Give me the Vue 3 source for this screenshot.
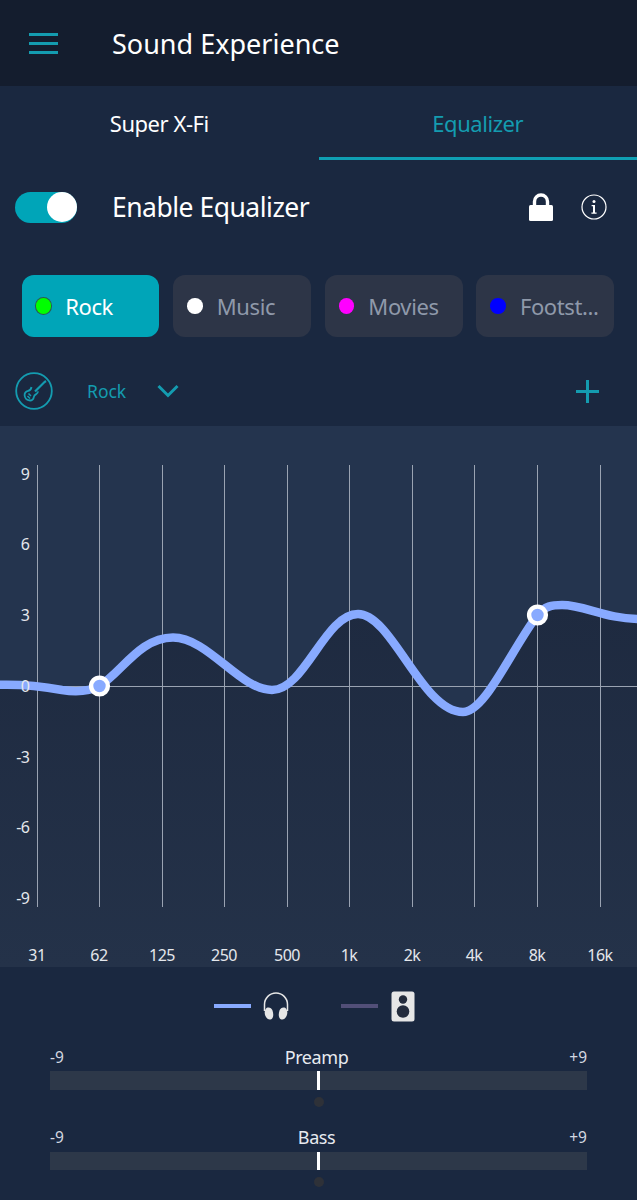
<template>
  <div class="screen">
    <header class="topbar">
      <button class="menu-btn" aria-label="Menu"><span></span><span></span><span></span></button>
      <h1>Sound Experience</h1>
    </header>

    <nav class="tabs">
      <div class="tab">Super X-Fi</div>
      <div class="tab active">Equalizer</div>
    </nav>

    <section class="enable-row">
      <div class="toggle"><div class="knob"></div></div>
      <div class="enable-label">Enable Equalizer</div>
      <svg class="lock" width="26" height="30" viewBox="0 0 26 30">
        <path d="M6.500 15V9.500a6.500 6.500 0 0 1 13 0V15" fill="none" stroke="#fff" stroke-width="3.400" />
        <rect x="1" y="13" width="24" height="16" rx="1.500" fill="#fff" />
      </svg>
      <svg class="info" width="26" height="26" viewBox="0 0 26 26">
        <circle cx="13" cy="13" r="12" fill="none" stroke="#fff" stroke-width="1.200" />
        <circle cx="13" cy="7.600" r="1.500" fill="#fff" />
        <path d="M10.600 11h3.400v7.400h1.600v1.300h-5.200v-1.300h1.600v-6.100h-1.400z" fill="#fff" />
      </svg>
    </section>

    <section class="presets">
      <div v-for="p in presets" :key="p.name" class="preset" :class="{ selected: p.selected }">
        <span class="dot" :style="{ background: p.color }"></span>
        <span class="preset-name">{{ p.name }}</span>
      </div>
    </section>

    <section class="profile-row">
      <svg class="guitar" width="38" height="38" viewBox="0 0 38 38" fill="none" stroke="#149cb0">
        <circle cx="19" cy="19" r="17.800" stroke-width="1.800" />
        <path d="M20 19.500L29.500 10l1.500-1" stroke-width="2.200" />
        <path d="M16.500 15c-.3 2-1.500 3.300-3.300 3.800-2 .6-3.800 1.800-3.600 4.400.2 2.500 2.200 4.700 4.600 5.200 2.600.5 4.300-1 4.600-3.300.2-1.500 1-2.300 2.400-3 1.200-.6 1.800-1.500 1.700-2.700" stroke-width="1.800" />
        <path d="M13.500 21.500l2.500 2.500M12.500 24l2.500 2.500" stroke-width="1.500" />
      </svg>
      <span class="profile-name">Rock</span>
      <svg class="chevron" width="22" height="14" viewBox="0 0 22 14">
        <path d="M1.500 2L11 11.500 20.500 2" fill="none" stroke="#149cb0" stroke-width="3" />
      </svg>
      <svg class="plus" width="23" height="23" viewBox="0 0 23 23">
        <path d="M11.500 0v23M0 11.500h23" fill="none" stroke="#149cb0" stroke-width="3" />
      </svg>
    </section>

    <section class="chart">
      <svg width="637" height="540" viewBox="0 0 637 540">
        <defs>
          <linearGradient id="underCurve" x1="0" y1="0" x2="0" y2="1">
            <stop offset="0" stop-color="#1e2a40" />
            <stop offset="1" stop-color="#243249" />
          </linearGradient>
        </defs>
        <path :d="fillPath" fill="url(#underCurve)" />
        <g stroke="#9aa3b2" stroke-width="1">
          <line v-for="x in gridX" :key="x" :x1="x" :x2="x" y1="38" y2="480" />
          <line x1="37" x2="637" y1="259.500" y2="259.500" />
        </g>
        <path :d="curvePath" fill="none" stroke="#88aaff" stroke-width="8.500" stroke-linecap="round" />
        <g class="axis">
          <text v-for="t in yTicks" :key="t.label" x="29.500" :y="t.y" text-anchor="end">{{ t.label }}</text>
          <text v-for="(f, i) in freqs" :key="f" :x="gridX[i] - 0.500" y="534" text-anchor="middle">{{ f }}</text>
        </g>
        <circle v-for="h in handles" :key="h.x" :cx="h.x" :cy="h.y" r="8.400" fill="#88aaff" stroke="#fff" stroke-width="4.400" />
      </svg>
    </section>

    <section class="legend">
      <span class="legend-line headphones"></span>
      <svg class="legend-icon" width="28" height="30" viewBox="0 0 28 30">
        <path d="M2.500 20v-6.500a11.500 11.500 0 0 1 23 0V20" fill="none" stroke="#e6e6e6" stroke-width="1.500" />
        <path d="M4.500 17c2.500-1.200 5 0 6 2.500 1 3 1 5.500 0 7.500-1.200 2-3.500 2-5 .8C2.500 25 1.500 20 4.500 17z" fill="#e6e6e6" />
        <path d="M23.500 17c-2.500-1.200-5 0-6 2.500-1 3-1 5.500 0 7.500 1.200 2 3.500 2 5 .8 3-2.800 4-7.800 1-10.800z" fill="#e6e6e6" />
      </svg>
      <span class="legend-line speaker"></span>
      <svg class="legend-icon" width="24" height="31" viewBox="0 0 24 31">
        <rect x="0.500" y="0.500" width="23" height="30" rx="2.500" fill="#e6e6e6" />
        <circle cx="12" cy="8.500" r="4.200" fill="#232b3c" />
        <circle cx="12" cy="20.500" r="6.300" fill="#232b3c" />
      </svg>
    </section>

    <section class="sliders">
      <div v-for="s in sliders" :key="s" class="slider">
        <div class="slider-head">
          <span class="limit">-9</span>
          <span class="slider-name">{{ s }}</span>
          <span class="limit">+9</span>
        </div>
        <div class="track"><div class="thumb"></div></div>
        <div class="center-dot"></div>
      </div>
    </section>
  </div>
</template>

<script setup>
const presets = [
  { name: 'Rock', color: '#00ff00', selected: true },
  { name: 'Music', color: '#ffffff' },
  { name: 'Movies', color: '#ff00ff' },
  { name: 'Footst...', color: '#0000ff' }
]

const gridX = [37.5, 99.5, 162.5, 224.5, 287.5, 349.5, 412.5, 474.5, 537.5, 600.5]
const freqs = ['31', '62', '125', '250', '500', '1k', '2k', '4k', '8k', '16k']
const yTicks = [
  { label: '9', y: 52.5 },
  { label: '6', y: 123 },
  { label: '3', y: 194 },
  { label: '0', y: 264.5 },
  { label: '-3', y: 335.5 },
  { label: '-6', y: 406 },
  { label: '-9', y: 477 }
]
const sliders = ['Preamp', 'Bass']

// chart svg starts at y=427 of the page
const handles = [
  { x: 99.5, y: 259 },
  { x: 537.5, y: 188 }
]

const curvePath =
  'M-4 258 C 20 257, 40 259, 62 263 C 75 265, 88 265, 99.5 259 ' +
  'C 122 245, 140 210.5, 173 210.5 C 208 210.5, 240 263, 272 263 ' +
  'C 305 263, 325 187, 358 187 C 392 187, 422 285, 463 285 ' +
  'C 485 285, 510 225, 537.5 188 C 545 179, 552 178, 562 178 ' +
  'C 585 178, 605 192, 641 192'

const fillPath = curvePath + ' L641 540 L-4 540 Z'
</script>

<style scoped>
.screen {
  width: 637px;
  height: 1200px;
  overflow: hidden;
  background: #1a2840;
  color: #fff;
  font-family: "Noto Sans", "Open Sans", sans-serif;
}

.topbar {
  height: 86px;
  background: #141d2e;
  display: flex;
  align-items: center;
  padding-left: 29px;
}

.menu-btn {
  width: 29px;
  height: 21px;
  padding: 0;
  border: none;
  background: none;
  display: flex;
  flex-direction: column;
  justify-content: space-between;
  margin-right: 54px;
}

.menu-btn span {
  display: block;
  height: 3px;
  background: #149cb0;
}

.topbar h1 {
  margin: 0;
  font-size: 27px;
  font-weight: 400;
}

.tabs {
  display: flex;
  height: 74px;
}

.tab {
  flex: 1;
  display: flex;
  align-items: center;
  justify-content: center;
  font-size: 22px;
  letter-spacing: -0.45px;
  box-sizing: border-box;
}

.tab.active {
  color: #149cb0;
  border-bottom: 3px solid #0f9fb3;
  padding-top: 3px;
}

.enable-row {
  display: flex;
  align-items: center;
  height: 94px;
  padding: 0 30px 0 15px;
}

.toggle {
  width: 62px;
  height: 31px;
  border-radius: 16px;
  background: #00a5b8;
  position: relative;
  margin-right: 35px;
}

.knob {
  position: absolute;
  right: 0;
  top: 0.5px;
  width: 30px;
  height: 30px;
  border-radius: 50%;
  background: #fff;
}

.enable-label {
  flex: 1;
  font-size: 26.5px;
  letter-spacing: -0.5px;
}

.lock {
  margin-right: 27px;
}

.presets {
  display: flex;
  gap: 13.9px;
  padding: 0 0 0 21.7px;
  margin-top: 21px;
}

.preset {
  width: 137.7px;
  height: 62px;
  box-sizing: border-box;
  border-radius: 12px;
  background: #2d3547;
  display: flex;
  align-items: center;
  padding-left: 14px;
  color: #8f99aa;
  font-size: 22px;
  letter-spacing: -0.4px;
}

.preset.selected {
  background: #00a5b8;
  color: #fff;
}

.preset-name {
  margin-bottom: 1px;
}

.dot {
  width: 15.5px;
  height: 15.5px;
  border-radius: 50%;
  margin-right: 14px;
}

.selected .dot {
  box-shadow: 0 0 0 1px #2c5c50;
}

.profile-row {
  height: 89px;
  padding: 19px 38px 0 15px;
  box-sizing: border-box;
  display: flex;
  align-items: center;
  color: #149cb0;
}

.profile-name {
  margin-left: 34px;
  font-size: 17.5px;
}

.chevron {
  margin-left: 31px;
}

.plus {
  margin-left: auto;
}

.chart {
  height: 541px;
  padding-top: 1px;
  box-sizing: border-box;
  background: #24344e;
}

.chart svg {
  display: block;
}

.axis text {
  fill: #e4e7ec;
  font-size: 16px;
  letter-spacing: -0.5px;
  font-family: "Noto Sans", "Open Sans", sans-serif;
}

.legend {
  height: 78px;
  display: flex;
  align-items: center;
  padding-left: 214px;
  box-sizing: border-box;
}

.legend-line {
  width: 37px;
  height: 4px;
}

.legend-line.headphones {
  background: #88aaff;
  margin-right: 11px;
}

.legend-line.speaker {
  background: #524f78;
  margin-left: 51px;
  margin-right: 13px;
}

.sliders {
  padding: 0 50px;
}

.slider {
  height: 80.5px;
}

.slider-head {
  display: flex;
  justify-content: space-between;
  align-items: center;
  height: 23px;
  margin-bottom: 3px;
}

.slider-name {
  font-size: 18px;
  letter-spacing: -0.4px;
  color: #e8ebf0;
}

.limit {
  font-size: 15.5px;
  color: #d4d8e0;
}

.track {
  height: 18.5px;
  background: #2d3849;
  position: relative;
}

.thumb {
  position: absolute;
  left: 267px;
  top: 0;
  width: 3px;
  height: 18.5px;
  background: #fff;
}

.center-dot {
  width: 10px;
  height: 10px;
  border-radius: 50%;
  background: #2e3138;
  margin: 7px auto 0;
  position: relative;
  left: 0.5px;
}
</style>
